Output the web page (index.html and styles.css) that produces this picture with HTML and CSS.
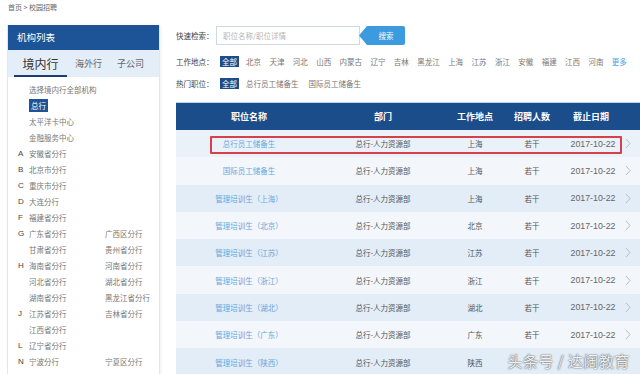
FILE: index.html
```html
<!DOCTYPE html>
<html lang="zh-CN">
<head>
  <meta charset="utf-8">
  <title>校园招聘</title>
  <link rel="stylesheet" href="styles.css">
</head>
<body>
  <div class="crumb">首页 &gt; 校园招聘</div>

  <div class="page">
    <div class="sidebar">
      <div class="side-title">机构列表</div>
      <div class="tabs">
        <div class="tab active">境内行</div>
        <div class="tab">海外行</div>
        <div class="tab">子公司</div>
      </div>
      <div class="org-list">
        <div class="org-row wide"><span class="letter"></span><span class="org">选择境内行全部机构</span></div>
        <div class="org-row"><span class="letter"></span><span class="org"><span class="chosen">总行</span></span></div>
        <div class="org-row"><span class="letter"></span><span class="org">太平洋卡中心</span></div>
        <div class="org-row"><span class="letter"></span><span class="org">金融服务中心</span></div>
        <div class="org-row"><span class="letter">A</span><span class="org">安徽省分行</span></div>
        <div class="org-row"><span class="letter">B</span><span class="org">北京市分行</span></div>
        <div class="org-row"><span class="letter">C</span><span class="org">重庆市分行</span></div>
        <div class="org-row"><span class="letter">D</span><span class="org">大连分行</span></div>
        <div class="org-row"><span class="letter">F</span><span class="org">福建省分行</span></div>
        <div class="org-row"><span class="letter">G</span><span class="org">广东省分行</span><span class="org">广西区分行</span></div>
        <div class="org-row"><span class="letter"></span><span class="org">甘肃省分行</span><span class="org">贵州省分行</span></div>
        <div class="org-row"><span class="letter">H</span><span class="org">海南省分行</span><span class="org">河南省分行</span></div>
        <div class="org-row"><span class="letter"></span><span class="org">河北省分行</span><span class="org">湖北省分行</span></div>
        <div class="org-row"><span class="letter"></span><span class="org">湖南省分行</span><span class="org">黑龙江省分行</span></div>
        <div class="org-row"><span class="letter">J</span><span class="org">江苏省分行</span><span class="org">吉林省分行</span></div>
        <div class="org-row"><span class="letter"></span><span class="org">江西省分行</span></div>
        <div class="org-row"><span class="letter">L</span><span class="org">辽宁省分行</span></div>
        <div class="org-row"><span class="letter">N</span><span class="org">宁波分行</span><span class="org">宁夏区分行</span></div>
      </div>
    </div>

    <div class="main">
      <div class="search-row">
        <span class="label">快速检索：</span>
        <div class="search-box">职位名称/职位详情</div>
        <div class="search-btn">搜索</div>
      </div>

      <div class="filter-row">
        <span class="label">工作地点：</span>
        <span class="badge">全部</span>
        <span class="opt">北京</span>
        <span class="opt">天津</span>
        <span class="opt">河北</span>
        <span class="opt">山西</span>
        <span class="opt">内蒙古</span>
        <span class="opt">辽宁</span>
        <span class="opt">吉林</span>
        <span class="opt">黑龙江</span>
        <span class="opt">上海</span>
        <span class="opt">江苏</span>
        <span class="opt">浙江</span>
        <span class="opt">安徽</span>
        <span class="opt">福建</span>
        <span class="opt">江西</span>
        <span class="opt">河南</span>
        <span class="opt more">更多</span>
      </div>

      <div class="filter-row hot">
        <span class="label">热门职位：</span>
        <span class="badge">全部</span>
        <span class="opt">总行员工储备生</span>
        <span class="opt">国际员工储备生</span>
      </div>

      <div class="job-table">
        <div class="job-row head">
          <div>职位名称</div>
          <div>部门</div>
          <div>工作地点</div>
          <div>招聘人数</div>
          <div>截止日期</div>
          <div></div>
        </div>
        <div class="job-row marked">
          <div class="job-name">总行员工储备生</div>
          <div>总行-人力资源部</div>
          <div>上海</div>
          <div>若干</div>
          <div class="date">2017-10-22</div>
          <div class="chev"><svg width="6" height="11" viewBox="0 0 6 11"><path d="M1 1l4 4.5L1 10" fill="none" stroke="#b5bfca" stroke-width="1"/></svg></div>
          <span class="red-box"></span>
        </div>
        <div class="job-row">
          <div class="job-name">国际员工储备生</div>
          <div>总行-人力资源部</div>
          <div>上海</div>
          <div>若干</div>
          <div class="date">2017-10-22</div>
          <div class="chev"><svg width="6" height="11" viewBox="0 0 6 11"><path d="M1 1l4 4.5L1 10" fill="none" stroke="#b5bfca" stroke-width="1"/></svg></div>
        </div>
        <div class="job-row">
          <div class="job-name">管理培训生（上海）</div>
          <div>总行-人力资源部</div>
          <div>上海</div>
          <div>若干</div>
          <div class="date">2017-10-22</div>
          <div class="chev"><svg width="6" height="11" viewBox="0 0 6 11"><path d="M1 1l4 4.5L1 10" fill="none" stroke="#b5bfca" stroke-width="1"/></svg></div>
        </div>
        <div class="job-row">
          <div class="job-name">管理培训生（北京）</div>
          <div>总行-人力资源部</div>
          <div>北京</div>
          <div>若干</div>
          <div class="date">2017-10-22</div>
          <div class="chev"><svg width="6" height="11" viewBox="0 0 6 11"><path d="M1 1l4 4.5L1 10" fill="none" stroke="#b5bfca" stroke-width="1"/></svg></div>
        </div>
        <div class="job-row">
          <div class="job-name">管理培训生（江苏）</div>
          <div>总行-人力资源部</div>
          <div>江苏</div>
          <div>若干</div>
          <div class="date">2017-10-22</div>
          <div class="chev"><svg width="6" height="11" viewBox="0 0 6 11"><path d="M1 1l4 4.5L1 10" fill="none" stroke="#b5bfca" stroke-width="1"/></svg></div>
        </div>
        <div class="job-row">
          <div class="job-name">管理培训生（浙江）</div>
          <div>总行-人力资源部</div>
          <div>浙江</div>
          <div>若干</div>
          <div class="date">2017-10-22</div>
          <div class="chev"><svg width="6" height="11" viewBox="0 0 6 11"><path d="M1 1l4 4.5L1 10" fill="none" stroke="#b5bfca" stroke-width="1"/></svg></div>
        </div>
        <div class="job-row">
          <div class="job-name">管理培训生（湖北）</div>
          <div>总行-人力资源部</div>
          <div>湖北</div>
          <div>若干</div>
          <div class="date">2017-10-22</div>
          <div class="chev"><svg width="6" height="11" viewBox="0 0 6 11"><path d="M1 1l4 4.5L1 10" fill="none" stroke="#b5bfca" stroke-width="1"/></svg></div>
        </div>
        <div class="job-row">
          <div class="job-name">管理培训生（广东）</div>
          <div>总行-人力资源部</div>
          <div>广东</div>
          <div>若干</div>
          <div class="date">2017-10-22</div>
          <div class="chev"><svg width="6" height="11" viewBox="0 0 6 11"><path d="M1 1l4 4.5L1 10" fill="none" stroke="#b5bfca" stroke-width="1"/></svg></div>
        </div>
        <div class="job-row">
          <div class="job-name">管理培训生（陕西）</div>
          <div>总行-人力资源部</div>
          <div>陕西</div>
          <div></div>
          <div></div>
          <div></div>
        </div>
      </div>
    </div>
  </div>

  <div class="watermark">头条号 / 达阔教育</div>
</body>
</html>
```

FILE: styles.css
```css
* {
  margin: 0;
  padding: 0;
  box-sizing: border-box;
}

body {
  font-family: "Noto Sans CJK SC", "Noto Sans", sans-serif;
  background-color: #ffffff;
  color: #555555;
  width: 640px;
  height: 374px;
  overflow: hidden;
  position: relative;
}

.crumb {
  height: 25px;
  padding: 2px 0 0 8px;
  font-size: 7px;
  line-height: 10px;
  color: #666666;
}

.page {
  display: flex;
  align-items: flex-start;
}

/* Left organisation panel */
.sidebar {
  width: 153px;
  flex-shrink: 0;
  margin-left: 7px;
  border: 1px solid #e3e6ea;
  border-top: none;
  box-shadow: 1px 0 3px rgba(0, 0, 0, 0.06);
  height: 360px;
}

.side-title {
  height: 25px;
  background: #1d5497;
  color: #ffffff;
  font-size: 9.5px;
  line-height: 25px;
  padding-left: 9px;
}

.tabs {
  height: 27px;
  background: #e3eef9;
  display: flex;
  align-items: center;
  padding-left: 6px;
  white-space: nowrap;
}

.tab {
  flex-shrink: 0;
  font-size: 9px;
  color: #666666;
  margin-right: 15px;
  height: 27px;
  line-height: 27px;
}

.tab.active {
  font-size: 12px;
  color: #333333;
  width: 53px;
  text-align: center;
  border-bottom: 2px solid #1b3f6e;
  margin-right: 8px;
}

.org-list {
  padding: 5px 0 0 10px;
}

.org-row {
  display: grid;
  grid-template-columns: 11px 76px auto;
  height: 16px;
  line-height: 16px;
  font-size: 7.5px;
  color: #777777;
  white-space: nowrap;
}

.org-row.wide .org {
  grid-column: 2 / 4;
}

.letter {
  color: #444444;
  font-family: "Liberation Sans", sans-serif;
  font-size: 8px;
}

.chosen {
  background: #1d5497;
  color: #ffffff;
  padding: 1px 2px;
}

/* Right main area */
.main {
  margin-left: 16px;
  flex: 1;
  min-width: 0;
}

.label {
  font-size: 7.5px;
  color: #444444;
  width: 44px;
  flex-shrink: 0;
}

.search-row {
  display: flex;
  align-items: center;
  height: 19px;
  margin-top: 1px;
}

.search-box {
  width: 144px;
  height: 19px;
  border: 1px solid #cfd9e3;
  font-size: 7.5px;
  line-height: 17px;
  color: #b5b5b5;
  padding-left: 6px;
  margin-left: -4px;
}

.search-btn {
  width: 46px;
  height: 19px;
  background: #3c9ade;
  color: #ffffff;
  font-size: 7.5px;
  line-height: 19px;
  text-align: center;
  padding-left: 8px;
  margin-left: -1px;
  border-radius: 0 2px 2px 0;
  clip-path: polygon(8px 0, 100% 0, 100% 100%, 8px 100%, 0 50%);
}

.filter-row {
  display: flex;
  align-items: center;
  height: 14px;
  margin-top: 9px;
  font-size: 7.5px;
  white-space: nowrap;
}

.filter-row.hot {
  margin-top: 8px;
}

.badge {
  background: #1d4c88;
  color: #ffffff;
  padding: 0 2px;
  line-height: 11px;
  margin-right: 7px;
}

.opt {
  color: #777777;
  margin-right: 8.4px;
}

.hot .opt {
  margin-right: 10px;
}

.opt.more {
  color: #4a9ede;
}

/* Job table */
.job-table {
  margin-top: 12px;
  border-top: 1px solid #b6d4ee;
  width: 480px;
}

.job-row {
  display: grid;
  grid-template-columns: 146px 122px 62px 52px 66px 32px;
  height: 27.3px;
  align-items: center;
  text-align: center;
  font-size: 7.5px;
  color: #555555;
  position: relative;
  white-space: nowrap;
}

.job-row:nth-child(odd) {
  background: #f3f6fa;
}

.job-row:nth-child(even) {
  background: #e2edf8;
}

.job-row.marked {
  background: #eaf1f9;
}

.job-row.head {
  height: 27px;
  background: #1c4d8b;
  color: #ffffff;
  font-size: 9px;
  font-weight: bold;
}

.job-name {
  color: #6aa6da;
}

.date {
  font-family: "Liberation Sans", sans-serif;
  font-size: 8.8px;
  color: #666666;
  padding-left: 4px;
}

.chev {
  display: flex;
  align-items: center;
  padding-left: 1px;
}

.red-box {
  position: absolute;
  left: 34px;
  top: 6px;
  width: 412px;
  height: 18px;
  border: 2px solid #d6404c;
  border-radius: 1px;
}

.watermark {
  position: absolute;
  right: 10px;
  bottom: 3px;
  font-size: 15px;
  color: rgba(255, 255, 255, 0.92);
  text-shadow: 0 0 2px rgba(60, 60, 60, 0.7), 0 0 1px rgba(60, 60, 60, 0.8);
  letter-spacing: 0.5px;
}
```
